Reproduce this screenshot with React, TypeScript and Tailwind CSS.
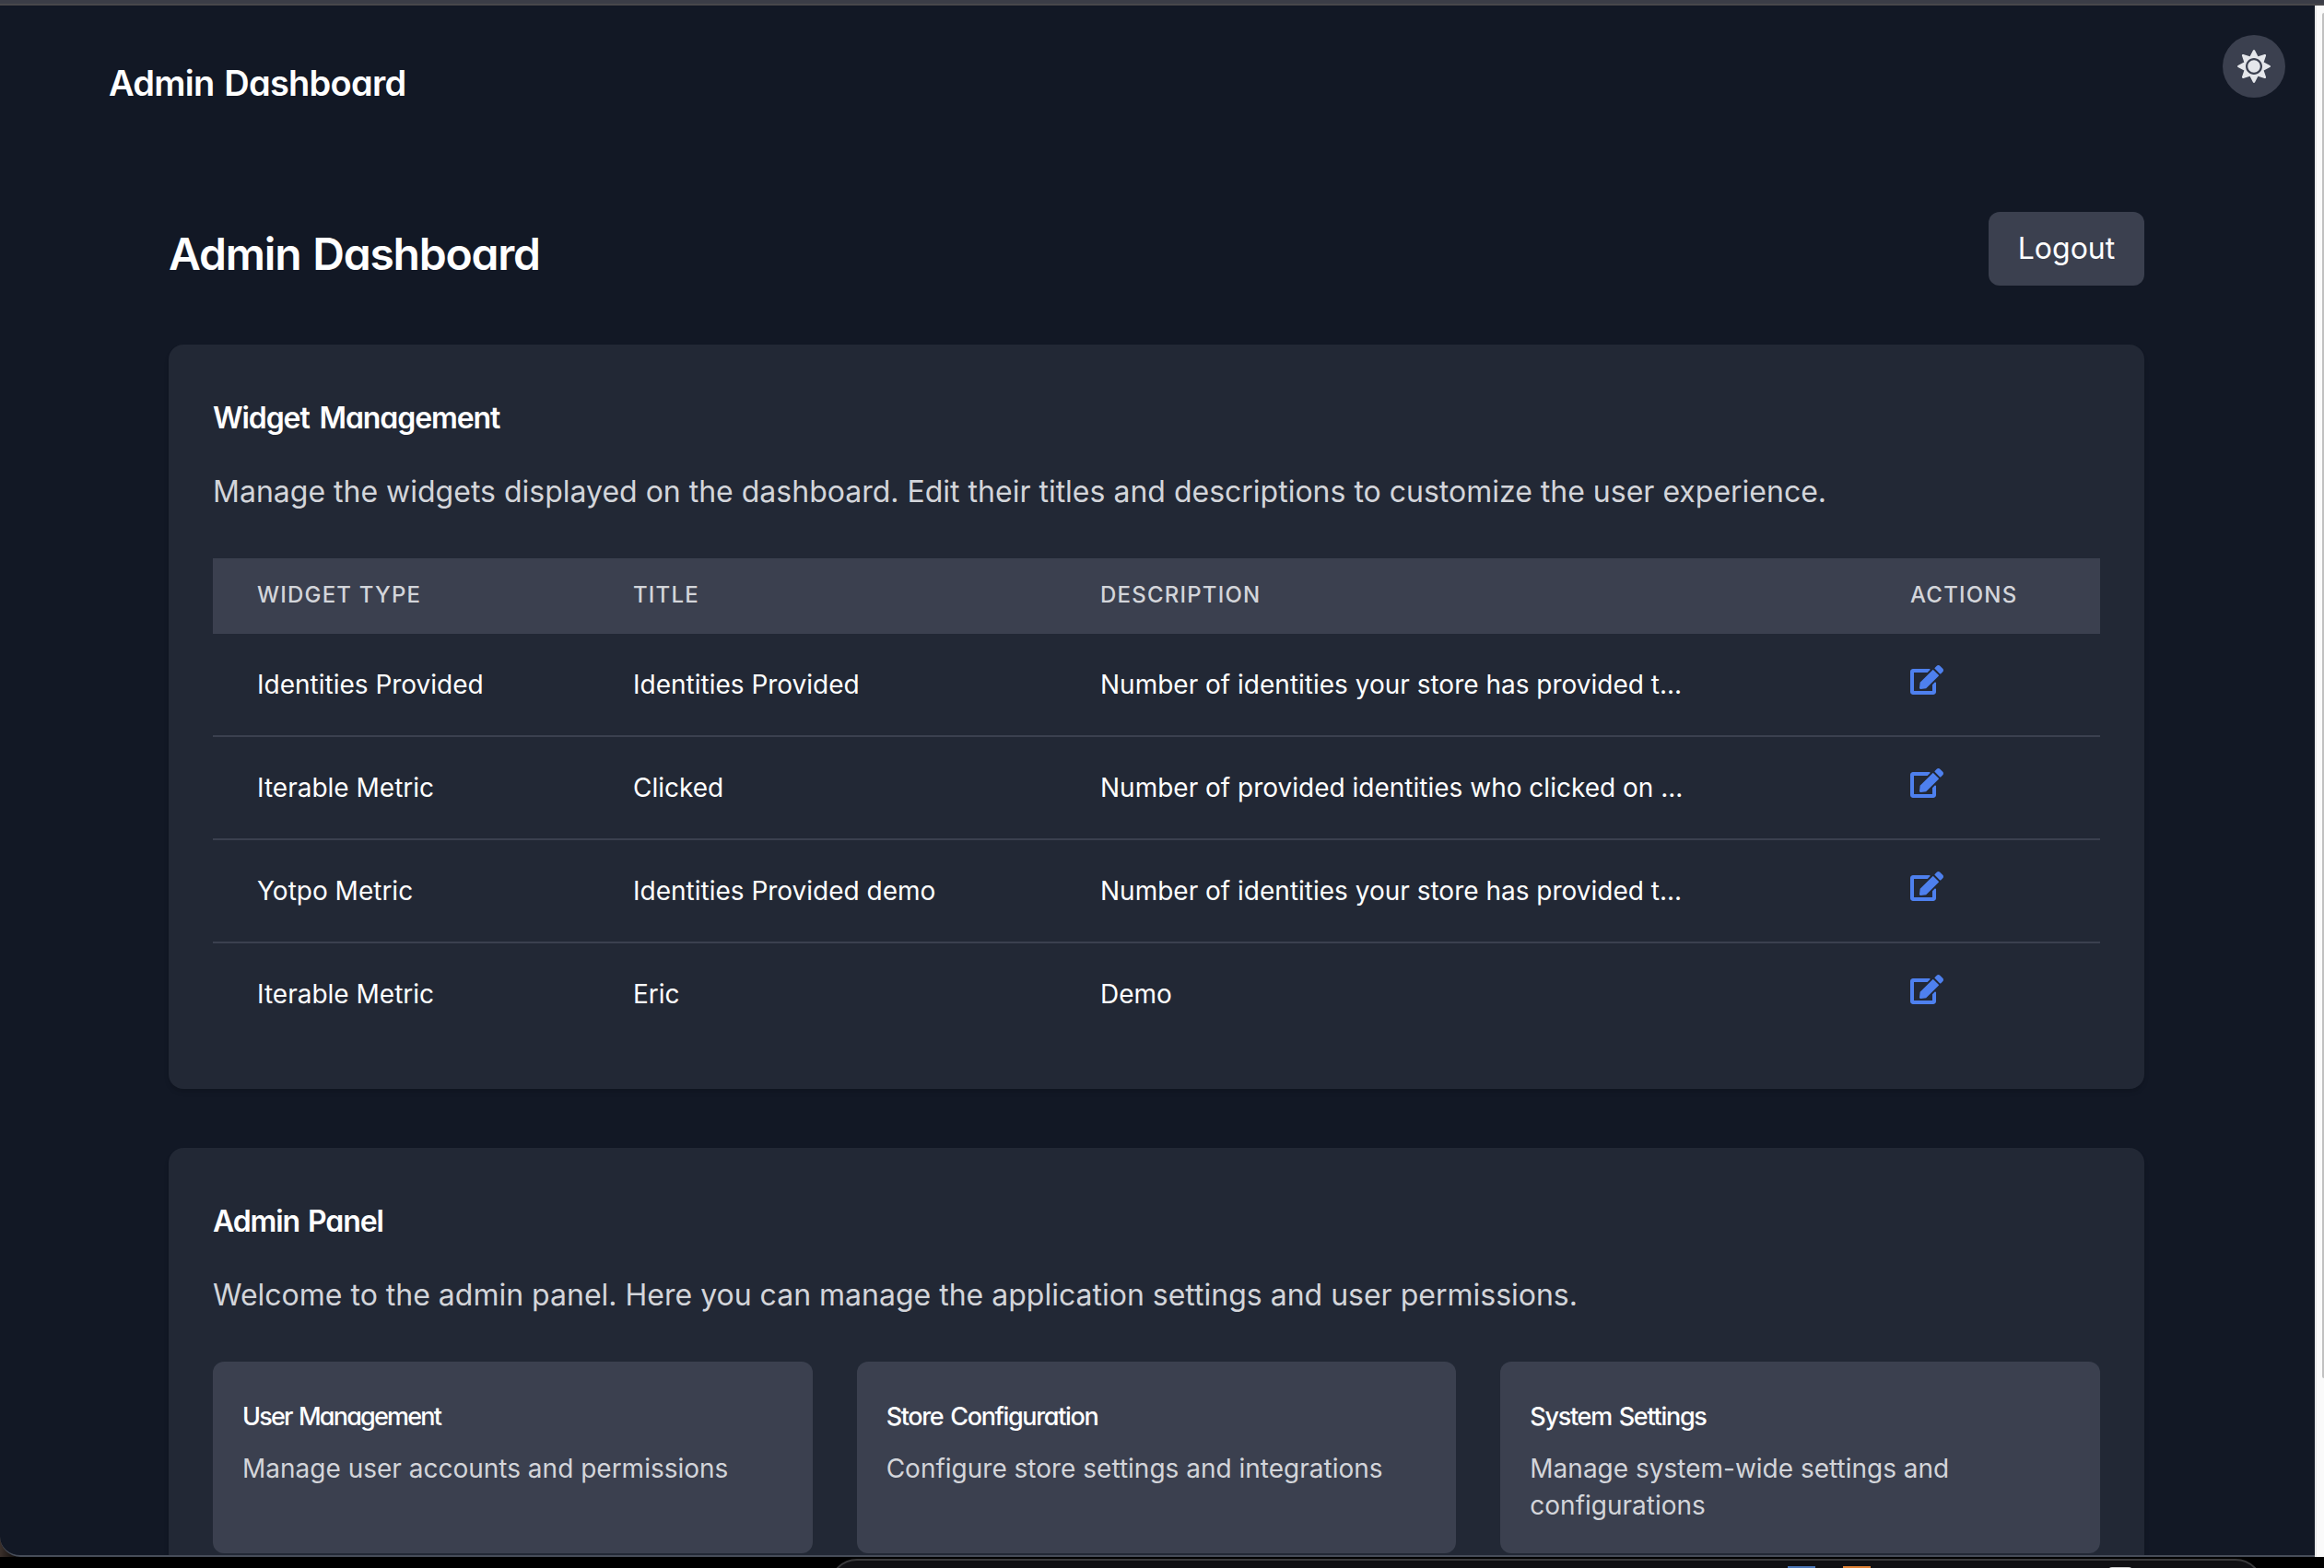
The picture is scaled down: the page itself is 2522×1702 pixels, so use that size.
import { FaEdit, FaSun } from "react-icons/fa";

const rows = [
  ["Identities Provided", "Identities Provided", "Number of identities your store has provided t..."],
  ["Iterable Metric", "Clicked", "Number of provided identities who clicked on ..."],
  ["Yotpo Metric", "Identities Provided demo", "Number of identities your store has provided t..."],
  ["Iterable Metric", "Eric", "Demo"],
];

const panels = [
  ["User Management", "Manage user accounts and permissions", "tracking-[-1.8px]"],
  ["Store Configuration", "Configure store settings and integrations", "tracking-[-1.35px]"],
  ["System Settings", "Manage system-wide settings and configurations", "tracking-[-1.3px]"],
];

const columns = "grid grid-cols-[408px_507px_879px_254px]";

function Header() {
  return (
    <header className="flex h-[224px] items-start justify-between pl-[118px] pr-8">
      <h2 className="mt-[60px] text-[38px] leading-[48px] font-semibold tracking-[-0.75px] [word-spacing:2px] whitespace-nowrap [font-feature-settings:'cv11']">
        Admin Dashboard
      </h2>
      <button className="mt-8 flex size-[68px] items-center justify-center rounded-full bg-[#3b404f] text-[#e5e7eb]">
        <FaSun className="size-9" />
      </button>
    </header>
  );
}

function WidgetTable() {
  return (
    <div className="mt-12 w-[2048px]">
      <div className={columns + " h-[82px] bg-[#3b404f] pt-6 text-2xl leading-8 font-medium tracking-[1.2px] text-[#d3d5da]"}>
        <div className="pl-12">WIDGET TYPE</div>
        <div className="pl-12">TITLE</div>
        <div className="pl-12">DESCRIPTION</div>
        <div className="pl-12">ACTIONS</div>
      </div>
      {rows.map(([type, title, description], i) => (
        <div
          key={i}
          className={columns + " h-28 border-b-2 border-[#3b404f] pt-8 text-[28px] leading-[46px] whitespace-nowrap last:h-[110px] last:border-b-0"}
        >
          <div className="pl-12">{type}</div>
          <div className="pl-12">{title}</div>
          <div className="pl-12">{description}</div>
          <div className="pl-12 text-[#4e80ee]">
            <FaEdit className="size-9" />
          </div>
        </div>
      ))}
    </div>
  );
}

function AdminPanel() {
  return (
    <section className="mt-16 h-[520px] rounded-2xl bg-[#222835] p-12 shadow-md">
      <h2 className="mt-2 text-[32px] leading-[48px] font-semibold tracking-[-1.1px] [word-spacing:2px] [font-feature-settings:'cv11']">
        Admin Panel
      </h2>
      <p className="mt-8 text-[32px] leading-[48px] text-[#d3d5da]">
        Welcome to the admin panel. Here you can manage the application settings and user permissions.
      </p>
      <div className="mt-12 grid grid-cols-3 gap-12">
        {panels.map(([title, text, tracking]) => (
          <article key={title} className="h-[208px] rounded-xl bg-[#3b404f] px-8 pt-10">
            <h3 className={"text-[27px] leading-10 font-medium [word-spacing:2px] [font-feature-settings:'cv11'] " + tracking}>{title}</h3>
            <p className="mt-4 text-[28px] leading-10 text-[#d3d5da]">{text}</p>
          </article>
        ))}
      </div>
    </section>
  );
}

function Dock() {
  return (
    <div className="ml-[900px] mt-0.5 flex h-[60px] w-[1556px] items-start rounded-[32px] border-2 border-[#3a3a3c] bg-[#111114]">
      <div className="ml-[1038px] mt-1.5 h-8 w-[30px] bg-[#4c78b8]" />
      <div className="ml-[30px] mt-1.5 h-8 w-[30px] bg-[#e08235]" />
      <div className="ml-[258px] mt-[7px] h-8 w-[26px] rounded-sm bg-[#c9c9c9]" />
    </div>
  );
}

export default function App() {
  return (
    <div className="h-[1702px] w-[2522px] overflow-hidden bg-black font-['Inter',sans-serif] text-white antialiased">
      <div className="h-1.5 border-b-2 border-[#48474b] bg-[#3b3d47]" />
      <div className="flex h-[1684px] bg-[linear-gradient(90deg,#3b302b_0,#000_24px)]">
        <div className="h-full w-[2512px] overflow-hidden rounded-bl-[22px] border-b-2 border-[#474d59] bg-[#121825]">
          <Header />
          <main className="ml-[183px] w-[2144px]">
            <div className="flex h-20 items-center justify-between">
              <h1 className="mt-3 text-[48px] leading-[60px] font-semibold tracking-[-1.2px] [word-spacing:2px] whitespace-nowrap [font-feature-settings:'cv11']">
                Admin Dashboard
              </h1>
              <button className="h-20 w-[169px] rounded-xl bg-[#3b404f] text-[32px]">Logout</button>
            </div>
            <section className="mt-16 h-[808px] rounded-2xl bg-[#222835] p-12 shadow-md">
              <h2 className="mt-2 text-[32px] leading-[48px] font-semibold tracking-[-1.1px] [word-spacing:4px] [font-feature-settings:'cv11']">
                Widget Management
              </h2>
              <p className="mt-8 text-[32px] leading-[48px] text-[#d3d5da]">
                Manage the widgets displayed on the dashboard. Edit their titles and descriptions to customize the user experience.
              </p>
              <WidgetTable />
            </section>
            <AdminPanel />
          </main>
        </div>
        <div className="flex h-full w-2.5 justify-end overflow-hidden border-l-2 border-[#e8e8e8] bg-[#fafafa] pt-2">
          <div className="h-[1482px] w-0.5 rounded-l-sm bg-[#c1c1c1]" />
        </div>
      </div>
      <Dock />
    </div>
  );
}
